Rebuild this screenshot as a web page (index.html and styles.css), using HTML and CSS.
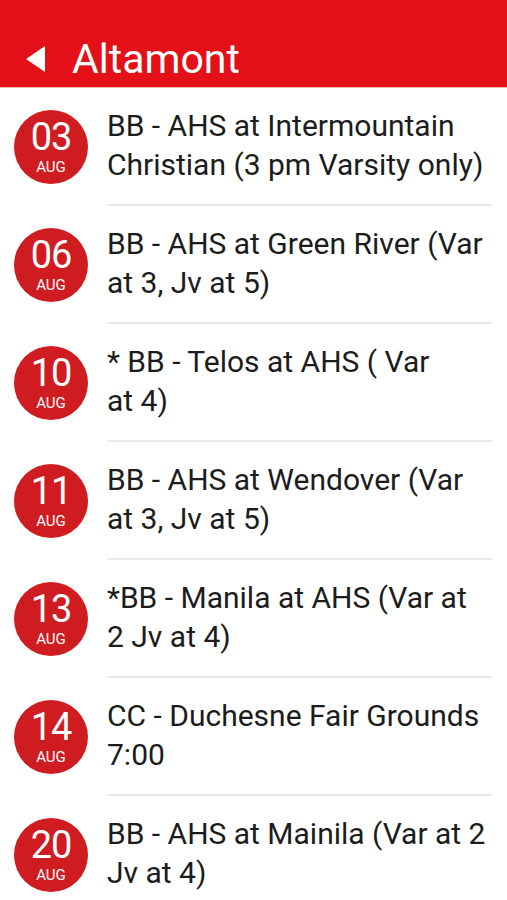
FILE: index.html
```html
<!DOCTYPE html>
<html lang="en">
<head>
    <meta charset="UTF-8">
    <meta name="viewport" content="width=device-width, initial-scale=1.0">
    <title>Altamont</title>
    <link rel="stylesheet" href="styles.css">
</head>
<body>
    <header class="topbar">
        <span class="back"></span>
        <h1>Altamont</h1>
    </header>
    <ul class="events">
        <li class="event">
            <div class="date"><span class="day">03</span><span class="month">AUG</span></div>
            <div class="title">BB - AHS at Intermountain Christian (3 pm Varsity only)</div>
        </li>
        <li class="event">
            <div class="date"><span class="day">06</span><span class="month">AUG</span></div>
            <div class="title">BB - AHS at Green River (Var at 3, Jv at 5)</div>
        </li>
        <li class="event">
            <div class="date"><span class="day">10</span><span class="month">AUG</span></div>
            <div class="title">* BB - Telos at AHS ( Var<br>at 4)</div>
        </li>
        <li class="event">
            <div class="date"><span class="day">11</span><span class="month">AUG</span></div>
            <div class="title">BB - AHS at Wendover (Var at 3, Jv at 5)</div>
        </li>
        <li class="event">
            <div class="date"><span class="day">13</span><span class="month">AUG</span></div>
            <div class="title">*BB - Manila at AHS (Var at<br>2 Jv at 4)</div>
        </li>
        <li class="event">
            <div class="date"><span class="day">14</span><span class="month">AUG</span></div>
            <div class="title">CC - Duchesne Fair Grounds 7:00</div>
        </li>
        <li class="event">
            <div class="date"><span class="day">20</span><span class="month">AUG</span></div>
            <div class="title">BB - AHS at Mainila (Var at 2 Jv at 4)</div>
        </li>
    </ul>
</body>
</html>
```

FILE: styles.css
```css
body {
    font-family: Roboto, 'Liberation Sans', sans-serif;
    margin: 0;
    padding: 0;
    background: #fff;
    width: 507px;
    height: 900px;
    overflow: hidden;
}
.topbar {
    background: #e31018;
    height: 87px;
    border-bottom: 1px solid #f3b5b5;
    display: flex;
    align-items: center;
}
.back {
    width: 0;
    height: 0;
    border-top: 13px solid transparent;
    border-bottom: 13px solid transparent;
    border-right: 19px solid #fff;
    margin-left: 26px;
    margin-top: 30px;
}
.topbar h1 {
    margin: 0 0 0 27px;
    padding-top: 30px;
    color: #fff;
    font-size: 41px;
    font-weight: 400;
}
.events {
    list-style: none;
    margin: 0;
    padding: 0;
}
.event {
    display: flex;
    height: 118px;
}
.date {
    flex: none;
    width: 74px;
    height: 74px;
    margin-left: 14px;
    align-self: center;
    border-radius: 50%;
    background: #cf1c20;
    color: #fff;
    display: flex;
    flex-direction: column;
    align-items: center;
}
.day {
    font-size: 38px;
    line-height: 38px;
    margin-top: 8px;
    letter-spacing: -1px;
}
.month {
    font-size: 15px;
    line-height: 16px;
    margin-top: 3px;
}
.title {
    flex: 1;
    margin-left: 19px;
    margin-right: 15px;
    border-bottom: 2px solid #e8e8e8;
    font-size: 30px;
    line-height: 39px;
    color: #1c1c1c;
    display: flex;
    align-items: center;
    padding-bottom: 2px;
}
```
